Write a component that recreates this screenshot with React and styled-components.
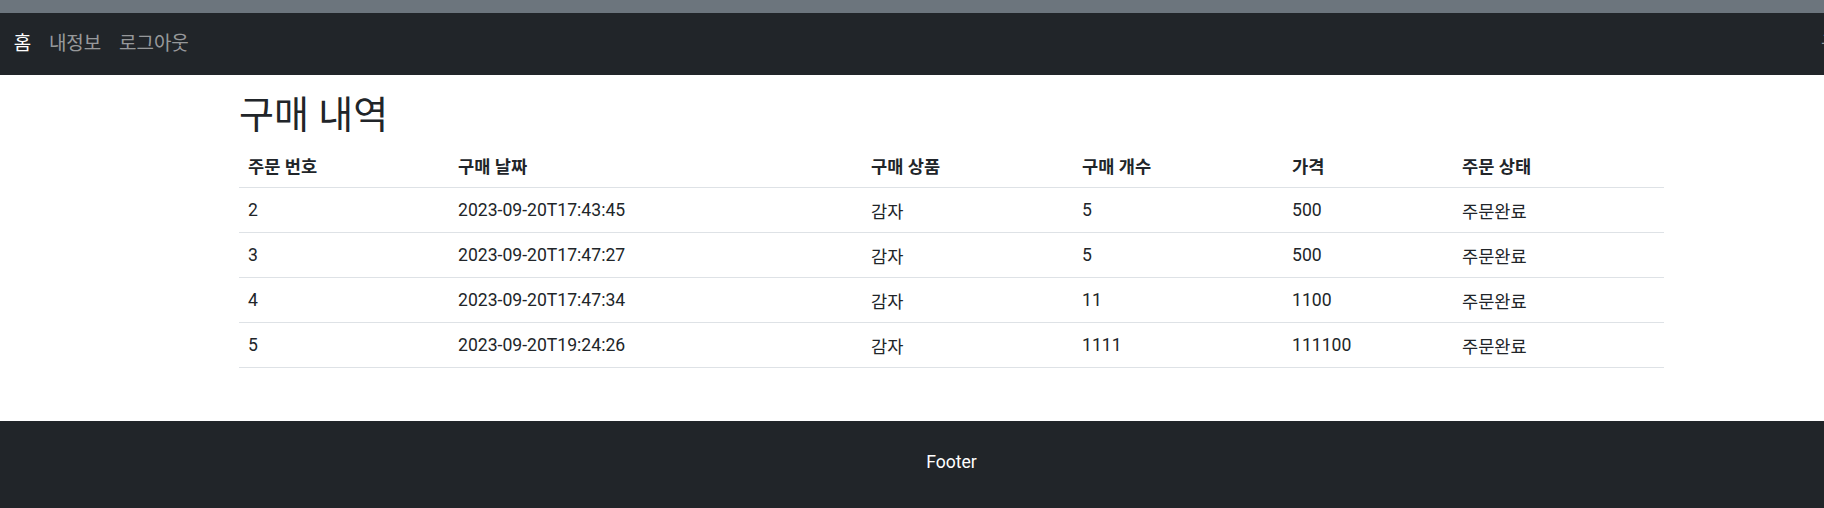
import React from "react";
import styled, { createGlobalStyle } from "styled-components";

const GlobalStyle = createGlobalStyle`
  html, body {
    margin: 0;
    overflow: hidden;
    background: #fff;
  }
  body {
    font-family: Roboto, "Noto Sans CJK KR", sans-serif;
    font-size: 17.6px;
    color: #212529;
  }
`;

const columns = [
  { title: "주문 번호", width: 210 },
  { title: "구매 날짜", width: 413 },
  { title: "구매 상품", width: 211 },
  { title: "구매 개수", width: 210 },
  { title: "가격", width: 170 },
  { title: "주문 상태", width: 211 },
];

const orders = [
  { id: 2, date: "2023-09-20T17:43:45", item: "감자", count: 5, price: 500, status: "주문완료" },
  { id: 3, date: "2023-09-20T17:47:27", item: "감자", count: 5, price: 500, status: "주문완료" },
  { id: 4, date: "2023-09-20T17:47:34", item: "감자", count: 11, price: 1100, status: "주문완료" },
  { id: 5, date: "2023-09-20T19:24:26", item: "감자", count: 1111, price: 111100, status: "주문완료" },
];

function App() {
  return (
    <Pagina>
      <GlobalStyle />
      <BarraGris />
      <NavBar>
        <NavLink $active>홈</NavLink>
        <NavLink>내정보</NavLink>
        <NavLink>로그아웃</NavLink>
        <NavLinkDerecha>구매내역</NavLinkDerecha>
      </NavBar>

      <Contenido>
        <Titulo>구매 내역</Titulo>
        <Tabla>
          <colgroup>
            {columns.map((col) => (
              <col key={col.title} width={col.width} />
            ))}
          </colgroup>
          <thead>
            <tr>
              {columns.map((col) => (
                <Th key={col.title}>{col.title}</Th>
              ))}
            </tr>
          </thead>
          <tbody>
            {orders.map((order) => (
              <tr key={order.id}>
                <Td>{order.id}</Td>
                <Td>{order.date}</Td>
                <Td>{order.item}</Td>
                <Td>{order.count}</Td>
                <Td>{order.price}</Td>
                <Td>{order.status}</Td>
              </tr>
            ))}
          </tbody>
        </Tabla>
      </Contenido>

      <Footer>Footer</Footer>
    </Pagina>
  );
}

export default App;

const Pagina = styled.div`
  width: 1903px;
`;

const BarraGris = styled.div`
  height: 13px;
  background-color: #6c757d;
`;

const NavBar = styled.nav`
  height: 62px;
  background-color: #212529;
  display: flex;
  align-items: center;
  padding: 0 12px 0 5px;
`;

const NavLink = styled.a`
  padding: 0 8.8px;
  line-height: 26px;
  font-size: 19px;
  color: ${(props) => (props.$active ? "#ffffff" : "rgba(255, 255, 255, 0.55)")};
  text-decoration: none;
  cursor: pointer;
`;

const NavLinkDerecha = styled(NavLink)`
  margin-left: auto;
  padding: 0;
`;

const Contenido = styled.main`
  width: 1425px;
  margin: 0 auto;
  padding-top: 18px;
`;

const Titulo = styled.h1`
  margin: 0 0 6px;
  font-size: 38px;
  font-weight: 400;
  line-height: 44px;
  color: #212529;
`;

const Tabla = styled.table`
  width: 100%;
  border-collapse: collapse;
  table-layout: fixed;
`;

const Th = styled.th`
  height: 44px;
  padding: 0 9px;
  text-align: left;
  font-weight: 700;
  border-bottom: 1px solid #dee2e6;
  vertical-align: middle;
`;

const Td = styled.td`
  height: 44px;
  padding: 0 9px;
  border-bottom: 1px solid #dee2e6;
  vertical-align: middle;
`;

const Footer = styled.footer`
  margin-top: 53px;
  padding: 28px 0 40px;
  background-color: #212529;
  color: #ffffff;
  text-align: center;
  line-height: 26px;
`;
